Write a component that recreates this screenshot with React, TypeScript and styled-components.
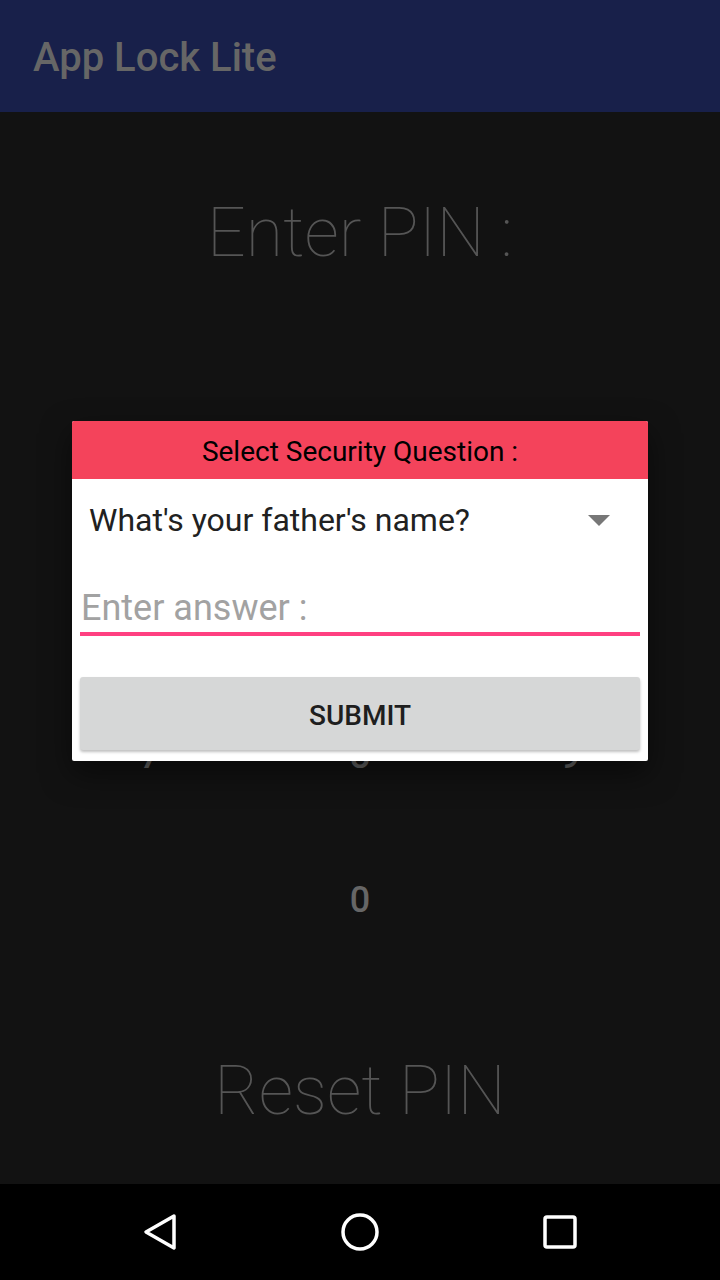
import React from 'react';
import styled, { createGlobalStyle } from 'styled-components';

const GlobalStyle = createGlobalStyle`
    html, body {
        margin: 0;
        padding: 0;
        background: #121212;
        font-family: Roboto, "Noto Sans", sans-serif;
    }
`;

const Screen = styled.div`
    position: relative;
    width: 720px;
    height: 1280px;
    display: flex;
    flex-direction: column;
    background: #121212;
    overflow: hidden;
`;

const AppBar = styled.header`
    height: 112px;
    flex: none;
    display: flex;
    align-items: center;
    padding-left: 33px;
    background: #18204a;
`;

const AppTitle = styled.h1`
    margin: 2px 0 0;
    font-size: 40px;
    font-weight: 500;
    color: #666666;
`;

const Content = styled.main`
    flex: 1;
    display: flex;
    flex-direction: column;
    align-items: center;
`;

const BigLabel = styled.div<{ $top: number }>`
    margin-top: ${(p) => p.$top}px;
    font-size: 68px;
    line-height: 68px;
    font-weight: 100;
    color: #555555;
`;

const Keypad = styled.div`
    margin-top: 417px;
    display: grid;
    grid-template-columns: repeat(3, 210px);
    grid-auto-rows: 144px;
`;

const Key = styled.div<{ $col?: number }>`
    grid-column: ${(p) => p.$col ?? 'auto'};
    display: flex;
    align-items: center;
    justify-content: center;
    font-size: 36px;
    line-height: 144px;
    font-weight: 500;
    color: #666666;
`;

const Dialog = styled.div`
    position: absolute;
    left: 72px;
    top: 421px;
    width: 576px;
    height: 340px;
    background: #ffffff;
    border-radius: 2px;
    box-shadow: 0 12px 30px rgba(0, 0, 0, 0.5);
    display: flex;
    flex-direction: column;
    overflow: hidden;
`;

const DialogHeader = styled.div`
    height: 58px;
    flex: none;
    display: flex;
    align-items: center;
    justify-content: center;
    padding-top: 2px;
    box-sizing: border-box;
    background: #f4435b;
    color: #000000;
    font-size: 28px;
`;

const DialogBody = styled.div`
    display: flex;
    flex-direction: column;
    padding: 0 8px;
`;

const Spinner = styled.div`
    height: 82px;
    display: flex;
    align-items: center;
    justify-content: space-between;
    padding: 0 30px 0 9px;
    font-size: 32px;
    color: #212121;
`;

const AnswerInput = styled.input`
    all: unset;
    padding: 29px 0 6px 1px;
    line-height: 36px;
    height: 36px;
    border-bottom: 4px solid #ff4081;
    font-family: Roboto, sans-serif;
    font-size: 36px;
    color: #212121;

    &::placeholder {
        color: #a2a2a2;
    }
`;

const SubmitButton = styled.button`
    all: unset;
    margin-top: 41px;
    height: 73px;
    border-radius: 3px;
    background: #d6d7d7;
    box-shadow: 0 2px 3px rgba(0, 0, 0, 0.25);
    display: flex;
    align-items: center;
    justify-content: center;
    padding-top: 3px;
    box-sizing: border-box;
    font-size: 28px;
    font-weight: 500;
    color: #1e1e1e;
`;

const NavBar = styled.nav`
    height: 96px;
    flex: none;
    background: #000000;
    display: flex;
    align-items: center;
    justify-content: center;
    gap: 128px;
`;

const NavButton = styled.div`
    width: 72px;
    height: 72px;
    display: flex;
    align-items: center;
    justify-content: center;
`;

const keys = ['7', '8', '9'];

export default function App() {
    return (
        <Screen>
            <GlobalStyle />
            <AppBar>
                <AppTitle>App Lock Lite</AppTitle>
            </AppBar>
            <Content>
                <BigLabel $top={87}>Enter PIN :</BigLabel>
                <Keypad>
                    {keys.map((k) => (
                        <Key key={k}>{k}</Key>
                    ))}
                    <Key $col={2}>0</Key>
                </Keypad>
                <BigLabel $top={85}>Reset PIN</BigLabel>
            </Content>
            <NavBar>
                <NavButton>
                    <svg width="36" height="38" viewBox="0 0 36 38">
                        <path
                            d="M32 3 L4 19 L32 35 Z"
                            fill="none"
                            stroke="#fff"
                            strokeWidth="3.5"
                            strokeLinejoin="round"
                        />
                    </svg>
                </NavButton>
                <NavButton>
                    <svg width="40" height="40" viewBox="0 0 40 40">
                        <circle cx="20" cy="20" r="17" fill="none" stroke="#fff" strokeWidth="3.5" />
                    </svg>
                </NavButton>
                <NavButton>
                    <svg width="36" height="36" viewBox="0 0 36 36">
                        <rect
                            x="3"
                            y="3"
                            width="30"
                            height="30"
                            rx="2"
                            fill="none"
                            stroke="#fff"
                            strokeWidth="3.5"
                        />
                    </svg>
                </NavButton>
            </NavBar>
            <Dialog>
                <DialogHeader>Select Security Question :</DialogHeader>
                <DialogBody>
                    <Spinner>
                        <span>What's your father's name?</span>
                        <svg width="22" height="11" viewBox="0 0 22 11">
                            <path d="M0 0 H22 L11 11 Z" fill="#777" />
                        </svg>
                    </Spinner>
                    <AnswerInput placeholder="Enter answer :" />
                    <SubmitButton>SUBMIT</SubmitButton>
                </DialogBody>
            </Dialog>
        </Screen>
    );
}
